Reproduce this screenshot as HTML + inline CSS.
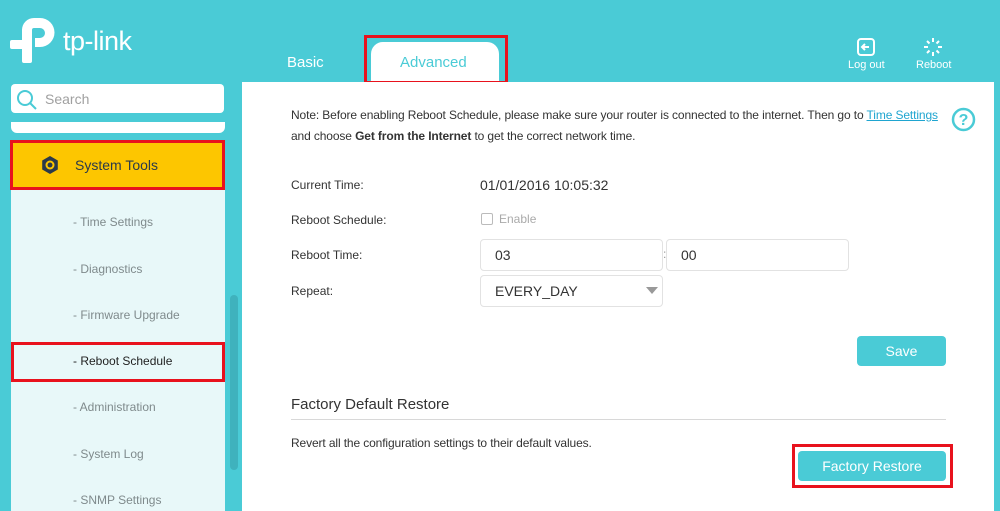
<!DOCTYPE html>
<html><head><style>
*{margin:0;padding:0;box-sizing:border-box}
body{width:1000px;height:511px;overflow:hidden;background:#4acbd6;font-family:"Liberation Sans",sans-serif;position:relative}
.a{position:absolute}
.lbl{position:absolute;left:291px;font-size:12px;color:#333;white-space:nowrap}
.inp{position:absolute;border:1px solid #e2e2e2;border-radius:4px;background:#fff;font-size:14px;color:#333;padding-left:14px;line-height:30px}
.sub{position:absolute;left:73px;font-size:12px;color:#7f8a8c}
.red{position:absolute;border:3px solid #e8121d}
</style></head><body>
<!-- logo -->
<svg class="a" style="left:0;top:0" width="62" height="70" viewBox="0 0 62 70" fill="#fff">
<rect x="22" y="28" width="10" height="35" rx="2"/>
<rect x="10" y="40" width="17" height="9" rx="2"/>
<path d="M22 36 V30 A12 12 0 0 1 34 18 H40 A14.5 14.5 0 0 1 40 47 H35 V38 H40 A5 5 0 0 0 40 28 H34 A2 2 0 0 0 32 30 V36 Z"/>
</svg>
<div class="a" style="left:63px;top:26px;font-size:27px;color:#fff;letter-spacing:-0.5px">tp-link</div>
<!-- tabs -->
<div class="a" style="left:287px;top:54px;font-size:15px;color:#fff">Basic</div>
<div class="a" style="left:371px;top:42px;width:128px;height:40px;background:#fff;border-radius:12px 12px 0 0"></div>
<div class="a" style="left:400px;top:54px;font-size:15px;color:#4acbd6">Advanced</div>
<div class="red" style="left:364px;top:35px;width:144px;height:49px"></div>
<!-- logout / reboot -->
<svg class="a" style="left:856px;top:37px" width="20" height="20" viewBox="0 0 20 20"><rect x="2" y="2" width="16" height="16" rx="3" fill="none" stroke="#fff" stroke-width="2"/><path d="M13 10H7M9 7L6 10L9 13" stroke="#fff" stroke-width="2" fill="none"/></svg>
<div class="a" style="left:848px;top:59px;font-size:11px;color:#fff">Log out</div>
<svg class="a" style="left:923px;top:37px" width="20" height="20" viewBox="0 0 20 20" stroke="#fff" stroke-width="2"><path d="M10 1V5M10 15V19M1 10H5M15 10H19M4 4L6.5 6.5M13.5 13.5L16 16M16 4L13.5 6.5M6.5 13.5L4 16"/></svg>
<div class="a" style="left:916px;top:59px;font-size:11px;color:#fff">Reboot</div>
<!-- sidebar -->
<div class="a" style="left:11px;top:84px;width:213px;height:29px;background:#fff;border-radius:4px"></div>
<svg class="a" style="left:16px;top:89px" width="22" height="22" viewBox="0 0 22 22"><circle cx="9" cy="9" r="7" fill="none" stroke="#4acbd6" stroke-width="2"/><path d="M14 14L20 20" stroke="#4acbd6" stroke-width="2"/></svg>
<div class="a" style="left:45px;top:91px;font-size:14px;color:#a0a0a0">Search</div>
<div class="a" style="left:11px;top:122px;width:214px;height:11px;background:#fff;border-radius:0 0 6px 6px"></div>
<div class="a" style="left:11px;top:189px;width:214px;height:322px;background:#e8f8f9"></div>
<div class="a" style="left:230px;top:295px;width:8px;height:175px;background:#3fb2bd;border-radius:4px"></div>
<div class="a" style="left:11px;top:141px;width:213px;height:48px;background:#fdc600"></div>
<svg class="a" style="left:40px;top:155px" width="20" height="20" viewBox="0 0 20 20"><polygon points="10,1 17.8,5.5 17.8,14.5 10,19 2.2,14.5 2.2,5.5" fill="#2b3a4a"/><circle cx="10" cy="10" r="4.5" fill="#fdc600"/><circle cx="10" cy="10" r="2.5" fill="#2b3a4a"/></svg>
<div class="a" style="left:75px;top:157px;font-size:14px;color:#2b3a4a">System Tools</div>
<div class="red" style="left:10px;top:140px;width:215px;height:50px"></div>
<div class="sub" style="top:215px">- Time Settings</div>
<div class="sub" style="top:262px">- Diagnostics</div>
<div class="sub" style="top:308px">- Firmware Upgrade</div>
<div class="sub" style="top:354px;color:#222">- Reboot Schedule</div>
<div class="red" style="left:11px;top:342px;width:214px;height:40px"></div>
<div class="sub" style="top:400px">- Administration</div>
<div class="sub" style="top:447px">- System Log</div>
<div class="sub" style="top:493px">- SNMP Settings</div>
<!-- content -->
<div class="a" style="left:242px;top:82px;width:752px;height:429px;background:#fff"></div>
<div class="lbl" style="top:108px;letter-spacing:-0.12px">Note: Before enabling Reboot Schedule, please make sure your router is connected to the internet. Then go to <span style="color:#1fa5d0;text-decoration:underline">Time Settings</span></div>
<div class="lbl" style="top:129px;letter-spacing:-0.12px">and choose <b>Get from the Internet</b> to get the correct network time.</div>
<svg class="a" style="left:951px;top:107px" width="25" height="25" viewBox="0 0 25 25"><circle cx="12.5" cy="12.5" r="10.5" fill="none" stroke="#4acbd6" stroke-width="2.5"/><text x="12.5" y="18" text-anchor="middle" font-size="16" font-weight="bold" fill="#4acbd6" font-family="Liberation Sans">?</text></svg>
<div class="lbl" style="top:178px">Current Time:</div>
<div class="a" style="left:480px;top:177px;font-size:14px;color:#333">01/01/2016 10:05:32</div>
<div class="lbl" style="top:213px">Reboot Schedule:</div>
<div class="a" style="left:481px;top:213px;width:12px;height:12px;border:1px solid #bbb;border-radius:2px"></div>
<div class="a" style="left:499px;top:212px;font-size:12px;color:#aaa">Enable</div>
<div class="lbl" style="top:248px">Reboot Time:</div>
<div class="inp" style="left:480px;top:239px;width:183px;height:32px">03</div>
<div class="a" style="left:663px;top:247px;font-size:12px;color:#999">:</div>
<div class="inp" style="left:666px;top:239px;width:183px;height:32px">00</div>
<div class="lbl" style="top:284px">Repeat:</div>
<div class="inp" style="left:480px;top:275px;width:183px;height:32px">EVERY_DAY</div>
<div class="a" style="left:646px;top:287px;width:0;height:0;border-left:6px solid transparent;border-right:6px solid transparent;border-top:7px solid #999"></div>
<div class="a" style="left:857px;top:336px;width:89px;height:30px;background:#4acbd6;border-radius:4px;color:#fff;font-size:14px;text-align:center;line-height:30px">Save</div>
<div class="a" style="left:291px;top:396px;font-size:15px;color:#333">Factory Default Restore</div>
<div class="a" style="left:291px;top:419px;width:655px;height:1px;background:#d8d8d8"></div>
<div class="lbl" style="top:436px;letter-spacing:-0.12px">Revert all the configuration settings to their default values.</div>
<div class="a" style="left:798px;top:451px;width:148px;height:30px;background:#4acbd6;border-radius:4px;color:#fff;font-size:14px;text-align:center;line-height:30px">Factory Restore</div>
<div class="red" style="left:792px;top:444px;width:161px;height:44px"></div>
</body></html>
